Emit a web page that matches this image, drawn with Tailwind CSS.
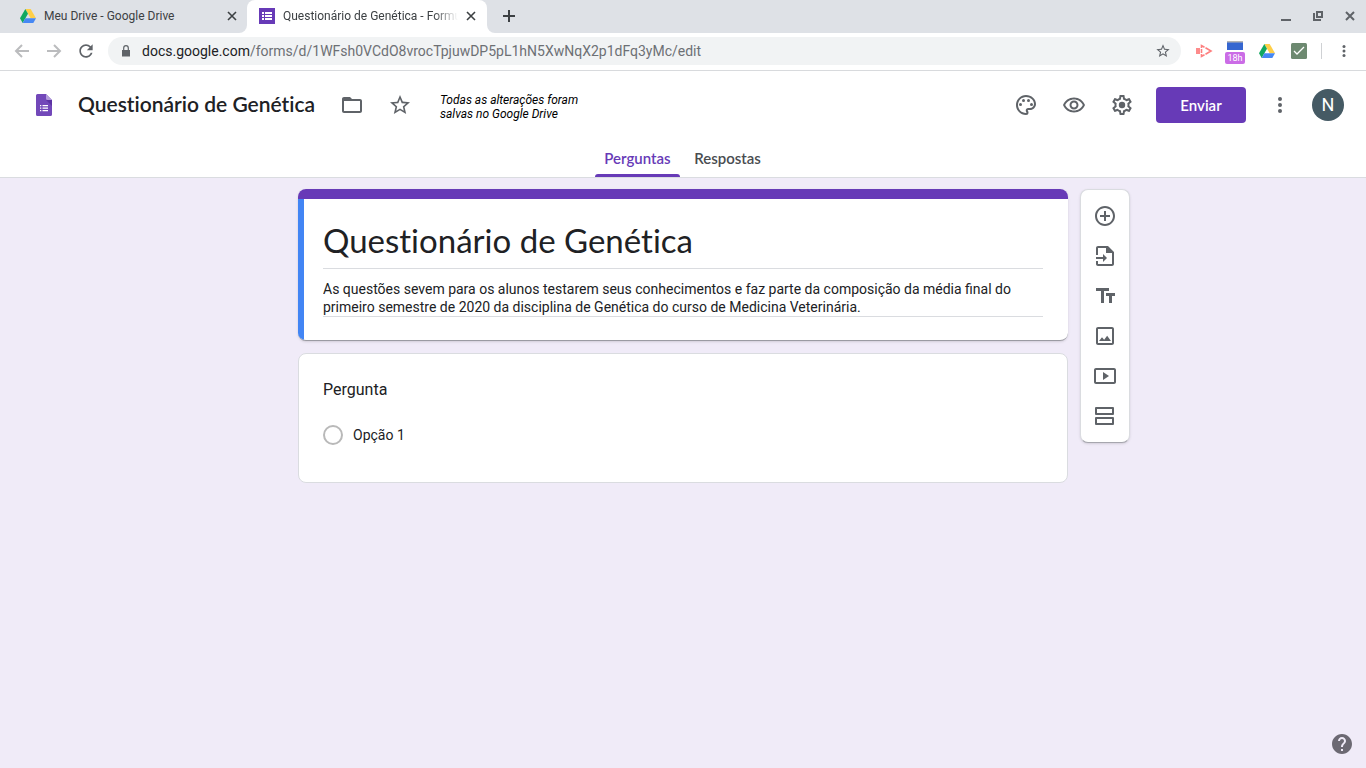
<!DOCTYPE html>
<html lang="pt-BR">
<head>
<meta charset="utf-8">
<meta name="viewport" content="width=device-width, initial-scale=1">
<title>Questionário de Genética - Formulários Google</title>
<script src="https://cdn.jsdelivr.net/npm/@tailwindcss/browser@4"></script>
</head>
<body class="flex min-h-screen flex-col bg-[#f0ebf8] font-['Roboto',sans-serif] text-[#202124]">

<!-- Shared drawings -->
<svg class="hidden" aria-hidden="true">
  <symbol id="drive" viewBox="0 0 24 21">
    <path fill="#ffcf48" d="M8 0h8l8 14h-8z"/>
    <path fill="#11a861" d="M8 0 0 14l4 7 8-14z"/>
    <path fill="#4688f4" d="M8 14h16l-4 7H4z"/>
  </symbol>
  <symbol id="star" viewBox="0 0 24 24">
    <path d="M22 9.24l-7.19-.62L12 2 9.19 8.63 2 9.24l5.46 4.73L5.82 21 12 17.27 18.18 21l-1.63-7.03L22 9.24zM12 15.4l-3.76 2.27 1-4.28-3.32-2.88 4.38-.38L12 6.1l1.71 4.04 4.38.38-3.32 2.88 1 4.28L12 15.4z"/>
  </symbol>
  <symbol id="cross" viewBox="0 0 10 10">
    <path fill="none" stroke="currentColor" stroke-width="1.6" d="M1 1l8 8M9 1 1 9"/>
  </symbol>
  <symbol id="dots" viewBox="0 0 24 24">
    <circle cx="12" cy="6" r="2"/><circle cx="12" cy="12" r="2"/><circle cx="12" cy="18" r="2"/>
  </symbol>
</svg>

<!-- Browser tab strip -->
<div class="flex h-[33px] bg-white text-xs text-[#3c4043]">
  <div class="flex w-[247px] shrink-0 items-center rounded-br-lg bg-[#dee1e6] pr-[10px] pb-px pl-5">
    <svg class="h-[14px] w-4"><use href="#drive"/></svg>
    <span class="ml-2 flex-1 whitespace-nowrap">Meu Drive - Google Drive</span>
    <button class="grid size-[10px] place-items-center" aria-label="Fechar guia"><svg class="size-[10px]"><use href="#cross"/></svg></button>
  </div>
  <div class="w-60 shrink-0 bg-[#dee1e6]">
    <div class="flex h-full items-center rounded-t-lg bg-white pr-[11px] pb-px pl-3">
      <svg class="size-4" viewBox="0 0 16 16"><path fill="#673ab7" d="M0 0h16v16H0z"/><path fill="#fff" d="M3 4h2v2H3zm3 0h7v2H6zM3 7h2v2H3zm3 0h7v2H6zM3 10h2v2H3zm3 0h7v2H6z"/></svg>
      <span class="ml-2 w-[175px] overflow-hidden whitespace-nowrap [mask-image:linear-gradient(to_right,black_86%,transparent)]">Questionário de Genética - Formulários Google</span>
      <span class="flex-1"></span>
      <button class="grid size-[10px] place-items-center" aria-label="Fechar guia"><svg class="size-[10px]"><use href="#cross"/></svg></button>
    </div>
  </div>
  <div class="flex min-w-0 flex-1 items-center rounded-bl-lg bg-[#dee1e6] pr-[11px] pb-px pl-4 text-[#5f6368]">
    <button aria-label="Nova guia" class="text-[#3c4043]"><svg class="size-3" viewBox="0 0 12 12"><path fill="none" stroke="currentColor" stroke-width="2" d="M6 0v12M0 6h12"/></svg></button>
    <div class="ml-auto flex items-center gap-[22px]">
      <button aria-label="Minimizar"><svg class="size-[10px]" viewBox="0 0 10 10"><path fill="currentColor" d="M0 8h10v2H0z"/></svg></button>
      <button aria-label="Restaurar"><svg class="size-[10px]" viewBox="0 0 10 10"><path fill="none" stroke="currentColor" stroke-width="2" d="M4 1h5v5H4zM1 2v7h7"/></svg></button>
      <button aria-label="Fechar"><svg class="size-[10px]" viewBox="0 0 10 10"><path fill="none" stroke="currentColor" stroke-width="2" d="M1 1l8 8M9 1 1 9"/></svg></button>
    </div>
  </div>
</div>

<!-- Address bar -->
<div class="flex h-[38px] items-center border-b border-[#d8dadd] bg-white pr-[13px] pb-px pl-[14px] text-[#5f6368]">
  <button aria-label="Voltar" class="text-[#bbbcbe]"><svg class="size-4" viewBox="0 0 16 16"><path fill="none" stroke="currentColor" stroke-width="2" d="M15 8H2M8 2 2 8l6 6"/></svg></button>
  <button aria-label="Avançar" class="ml-4 text-[#bbbcbe]"><svg class="size-4" viewBox="0 0 16 16"><path fill="none" stroke="currentColor" stroke-width="2" d="M1 8h13M8 2l6 6-6 6"/></svg></button>
  <button aria-label="Recarregar" class="ml-[14px]"><svg class="size-5" viewBox="0 0 24 24"><path fill="currentColor" d="M17.65 6.35C16.2 4.9 14.21 4 12 4c-4.42 0-7.99 3.58-7.99 8s3.57 8 7.99 8c3.73 0 6.84-2.55 7.73-6h-2.08c-.82 2.33-3.04 4-5.65 4-3.31 0-6-2.69-6-6s2.69-6 6-6c1.66 0 3.14.69 4.22 1.78L13 11h7V4l-2.35 2.35z"/></svg></button>
  <div class="ml-3 flex h-7 min-w-0 flex-1 items-center rounded-full bg-[#f1f3f4] pr-[10px] pl-[14px]">
    <svg class="h-3 w-2" viewBox="0 0 8 12"><path fill="currentColor" d="M0 5h8v6.500H0z"/><path fill="none" stroke="currentColor" stroke-width="1.200" d="M1.700 5V3a2.300 2.300 0 0 1 4.600 0v2"/></svg>
    <a href="#" class="ml-3 flex-1 truncate text-sm text-[#6d7074]"><span class="text-[#202124]">docs.google.com</span>/forms/d/1WFsh0VCdO8vrocTpjuwDP5pL1hN5XwNqX2p1dFq3yMc/edit</a>
    <button aria-label="Favoritar página"><svg class="size-4 fill-current"><use href="#star"/></svg></button>
  </div>
  <div class="ml-[13px] flex shrink-0 items-center gap-4">
    <svg class="h-4 w-5" viewBox="0 0 20 16"><path fill="#fd8b8b" d="M2 5h4v6H2z"/><path fill="none" stroke="#fd7f7f" stroke-width="1.600" d="M7.500 5V2.500l3 1.700m1 .6L17 8l-5.500 3.200m-1 .6-3 1.700V11m0-1V6"/></svg>
    <div class="relative -ml-[5px] h-5 w-5">
      <svg class="h-[10px] w-5" viewBox="0 0 20 10"><path fill="#b5b5b5" d="M2 0h16v2H2z"/><path fill="#3566d0" d="M2 1.500h16V9H2z"/></svg>
      <span class="absolute top-[11px] left-0 h-3 w-5 rounded-xs bg-[#cb6ce6] text-center text-[9px] leading-3 text-white">18h</span>
    </div>
    <svg class="-ml-[2px] h-[14px] w-4"><use href="#drive"/></svg>
    <svg class="size-4" viewBox="0 0 16 16"><rect width="16" height="16" rx="1.500" fill="#6d8970"/><path fill="none" stroke="#fff" stroke-width="1.300" d="M3 8l3 3 7-7"/></svg>
    <span class="-ml-[2px] h-4 w-px bg-[#cfd1d4]"></span>
    <button aria-label="Mais opções do navegador" class="-ml-[3px]"><svg class="size-[18px] fill-current"><use href="#dots"/></svg></button>
  </div>
</div>

<!-- Form header -->
<header class="border-b border-[#dadce0] bg-white">
  <div class="flex h-[68px] items-center pr-[22px] pl-8 text-[#5f6368]">
    <a href="#" aria-label="Formulários"><svg class="size-6" viewBox="0 0 24 24"><path fill="#7248b9" d="M5.500 1H14l6 6v14.500a1.500 1.500 0 0 1-1.500 1.500h-13A1.500 1.500 0 0 1 4 21.500v-19A1.500 1.500 0 0 1 5.500 1z"/><path fill="#5c33a3" d="M14 7h6v6z"/><path fill="#b39ddb" d="M14 1l6 6h-4.500A1.500 1.500 0 0 1 14 5.500z"/><path fill="#fff" d="M8 12h1.300v1.300H8zm2.500 0H16v1.300h-5.500zM8 14.500h1.300v1.300H8zm2.500 0H16v1.300h-5.500zM8 17h1.300v1.300H8zm2.500 0H16v1.300h-5.500z"/></svg></a>
    <input aria-label="Nome do arquivo" value="Questionário de Genética" class="ml-[22px] w-[250px] pb-[2px] font-['Lato',sans-serif] text-[21px] font-semibold text-[#202124] [font-variant-ligatures:none]">
    <button aria-label="Mover para pasta" class="ml-3"><svg class="size-6 fill-current" viewBox="0 0 24 24"><path d="M20 6h-8l-2-2H4c-1.100 0-1.990.9-1.990 2L2 18c0 1.100.9 2 2 2h16c1.100 0 2-.9 2-2V8c0-1.100-.9-2-2-2zm0 12H4V8h16v10z"/></svg></button>
    <button aria-label="Marcar com estrela" class="ml-6"><svg class="size-6 fill-current"><use href="#star"/></svg></button>
    <p class="ml-7 pt-1 text-xs leading-[14px] text-black italic">Todas as alterações foram<br>salvas no Google Drive</p>
    <div class="ml-auto flex items-center gap-6">
      <button aria-label="Personalizar tema"><svg class="size-6 fill-current" viewBox="0 0 24 24"><path d="M12 22C6.490 22 2 17.510 2 12S6.490 2 12 2s10 4.040 10 9c0 3.310-2.690 6-6 6h-1.770c-.28 0-.5.22-.5.5 0 .12.05.23.13.33.41.47.64 1.060.64 1.670A2.500 2.500 0 0 1 12 22zm0-18c-4.410 0-8 3.590-8 8s3.590 8 8 8c.28 0 .5-.22.5-.5a.54.54 0 0 0-.14-.35c-.41-.46-.63-1.050-.63-1.650a2.500 2.500 0 0 1 2.500-2.500H16c2.210 0 4-1.790 4-4 0-3.860-3.590-7-8-7z"/><circle cx="6.500" cy="11.500" r="1.500"/><circle cx="9.500" cy="7.500" r="1.500"/><circle cx="14.500" cy="7.500" r="1.500"/><circle cx="17.500" cy="11.500" r="1.500"/></svg></button>
      <button aria-label="Visualizar"><svg class="size-6 fill-current" viewBox="0 0 24 23"><path d="M12 6c3.790 0 7.170 2.130 8.820 5.500C19.170 14.870 15.790 17 12 17s-7.170-2.130-8.820-5.500C4.830 8.130 8.210 6 12 6m0-2C7 4 2.730 7.110 1 11.500 2.730 15.890 7 19 12 19s9.270-3.110 11-7.500C21.270 7.110 17 4 12 4zm0 5c1.380 0 2.500 1.120 2.500 2.500S13.380 14 12 14s-2.500-1.120-2.500-2.500S10.620 9 12 9m0-2c-2.480 0-4.500 2.020-4.500 4.500S9.520 16 12 16s4.500-2.020 4.500-4.500S14.480 7 12 7z"/></svg></button>
      <button aria-label="Configurações"><svg class="size-6 fill-current" viewBox="0 0 24 24"><path d="M19.430 12.980c.04-.32.07-.64.07-.98s-.03-.66-.07-.98l2.110-1.650c.19-.15.24-.42.12-.64l-2-3.460c-.09-.16-.26-.25-.44-.25-.06 0-.12.01-.17.03l-2.490 1c-.52-.4-1.080-.73-1.690-.98l-.38-2.650C14.460 2.180 14.250 2 14 2h-4c-.25 0-.46.18-.49.42l-.38 2.650c-.61.25-1.170.59-1.690.98l-2.490-1c-.06-.02-.12-.03-.18-.03-.17 0-.34.09-.43.25l-2 3.460c-.13.22-.07.49.12.64l2.110 1.650c-.04.32-.07.65-.07.98s.03.66.07.98l-2.110 1.650c-.19.15-.24.42-.12.64l2 3.460c.09.16.26.25.44.25.06 0 .12-.01.17-.03l2.490-1c.52.4 1.080.73 1.690.98l.38 2.650c.03.24.24.42.49.42h4c.25 0 .46-.18.49-.42l.38-2.650c.61-.25 1.170-.59 1.690-.98l2.490 1c.06.02.12.03.18.03.17 0 .34-.09.43-.25l2-3.460c.12-.22.07-.49-.12-.64l-2.110-1.650zm-1.980-1.710c.04.31.05.52.05.73 0 .21-.02.43-.05.73l-.14 1.130.89.7 1.080.84-.7 1.210-1.270-.51-1.040-.42-.9.68c-.43.32-.84.56-1.250.73l-1.060.43-.16 1.130-.2 1.350h-1.400l-.19-1.350-.16-1.130-1.060-.43c-.43-.18-.83-.41-1.230-.71l-.91-.7-1.060.43-1.270.51-.7-1.210 1.080-.84.89-.7-.14-1.130c-.03-.31-.05-.54-.05-.74s.02-.43.05-.73l.14-1.130-.89-.7-1.080-.84.7-1.210 1.270.51 1.040.42.9-.68c.43-.32.84-.56 1.250-.73l1.060-.43.16-1.130.2-1.350h1.390l.19 1.350.16 1.130 1.060.43c.43.18.83.41 1.230.71l.91.7 1.060-.43 1.270-.51.7 1.210-1.070.85-.89.7.14 1.130z"/><circle cx="12" cy="12" r="3.200"/></svg></button>
    </div>
    <button class="ml-[22px] h-9 w-[90px] rounded bg-[#673ab7] font-['Lato',sans-serif] text-[15px] font-semibold text-white">Enviar</button>
    <button aria-label="Mais opções" class="ml-[22px]"><svg class="size-6 fill-current"><use href="#dots"/></svg></button>
    <button aria-label="Conta" class="ml-5 grid size-8 place-items-center rounded-full bg-[#455a64] text-lg text-white">N</button>
  </div>
  <nav class="flex h-[38px] justify-center gap-1 font-['Lato',sans-serif] text-[15px] font-semibold">
    <a href="#" class="relative flex w-[85px] items-center justify-center text-[#673ab7]">Perguntas<span class="absolute inset-x-0 bottom-0 h-[3px] rounded-t-sm bg-[#673ab7]"></span></a>
    <a href="#" class="flex w-[87px] items-center justify-center text-[#494c50]">Respostas</a>
  </nav>
</header>

<main class="grid grid-cols-[1fr_minmax(0,770px)_1fr] items-start gap-3 pt-[11px]">
  <div class="col-start-2 flex flex-col gap-3">
    <section class="overflow-hidden rounded-lg border-b border-[#9b9ba3] bg-white shadow-sm">
      <div class="h-[10px] bg-[#673ab7]"></div>
      <div class="border-l-[6px] border-[#4285f4] pt-5 pr-[25px] pb-[23px] pl-[19px]">
        <input aria-label="Título do formulário" value="Questionário de Genética" class="block h-[50px] w-full border-b border-[#dadce0] pb-[7px] font-['Lato',sans-serif] text-[33px] [font-variant-ligatures:none]">
        <textarea aria-label="Descrição do formulário" rows="2" class="mt-[11px] block h-[37px] w-full resize-none overflow-hidden border-b border-[#dadce0] text-sm leading-[18px]">As questões sevem para os alunos testarem seus conhecimentos e faz parte da composição da média final do
primeiro semestre de 2020 da disciplina de Genética do curso de Medicina Veterinária.</textarea>
      </div>
    </section>
    <section class="rounded-lg border border-[#dadce0] bg-white px-6 pt-6 pb-[37px]">
      <h2 class="text-base">Pergunta</h2>
      <div class="mt-[23px] flex items-center gap-[10px]">
        <input type="radio" id="op1" name="pergunta" class="size-5 appearance-none rounded-full border-2 border-[#b9b9b9]">
        <label for="op1" class="text-sm">Opção 1</label>
      </div>
    </section>
  </div>

  <aside class="flex w-[50px] flex-col items-center gap-4 rounded-lg border border-[#dadce0] border-b-[#a6a6ae] bg-white py-[14px] text-[#5f6368] shadow-sm">
    <button aria-label="Adicionar pergunta"><svg class="size-6 fill-current" viewBox="0 0 24 24"><path d="M13 7h-2v4H7v2h4v4h2v-4h4v-2h-4V7zm-1-5C6.480 2 2 6.480 2 12s4.480 10 10 10 10-4.480 10-10S17.520 2 12 2zm0 18c-4.410 0-8-3.590-8-8s3.590-8 8-8 8 3.590 8 8-3.590 8-8 8z"/></svg></button>
    <button aria-label="Importar perguntas"><svg class="size-6 fill-current" viewBox="0 0 24 24"><path d="M14 2H5c-1.100 0-2 .9-2 2v7h2V4h8v5h6v11H5v-3H3v3c0 1.100.9 2 2 2h14c1.100 0 2-.9 2-2V8l-6-6z"/><path d="M3 13h7v-3l4 4-4 4v-3H3z"/></svg></button>
    <button aria-label="Adicionar título e descrição"><svg class="size-6 fill-current" viewBox="0 0 24 24"><path d="M3 4v3h5v12h3V7h5V4zM13 9v3h3v7h3v-7h3V9z"/></svg></button>
    <button aria-label="Adicionar imagem"><svg class="size-6 fill-current" viewBox="0 0 24 24"><path d="M19 5v14H5V5h14m0-2H5c-1.100 0-2 .9-2 2v14c0 1.100.9 2 2 2h14c1.100 0 2-.9 2-2V5c0-1.100-.9-2-2-2z"/><path d="M14.140 11.860l-3 3.870L9 13.140 6 17h12z"/></svg></button>
    <button aria-label="Adicionar vídeo"><svg class="size-6 fill-current" viewBox="0 0 24 24"><path d="M10 8v8l6-4zM21 4H3c-1.100 0-2 .9-2 2v12c0 1.100.9 2 2 2h18c1.100 0 2-.9 2-2V6c0-1.100-.9-2-2-2zm0 14H3V6h18z"/></svg></button>
    <button aria-label="Adicionar seção"><svg class="size-6" viewBox="0 0 24 24"><path fill="none" stroke="currentColor" stroke-width="2" stroke-linejoin="round" d="M3 4h17v6H3zM3 14h17v6H3z"/></svg></button>
  </aside>
</main>

<footer class="mt-auto flex justify-end pr-3 pb-3">
  <button aria-label="Ajuda"><svg class="size-6" viewBox="0 0 24 24"><path fill="#6c6973" d="M12 2C6.480 2 2 6.480 2 12s4.480 10 10 10 10-4.480 10-10S17.520 2 12 2zm1 17h-2v-2h2v2zm2.070-7.750l-.9.920C13.450 12.900 13 13.500 13 15h-2v-.5c0-1.100.45-2.100 1.170-2.830l1.240-1.260c.37-.36.59-.86.59-1.410 0-1.100-.9-2-2-2s-2 .9-2 2H8c0-2.210 1.790-4 4-4s4 1.790 4 4c0 .88-.36 1.680-.93 2.250z"/></svg></button>
</footer>
</body>
</html>
